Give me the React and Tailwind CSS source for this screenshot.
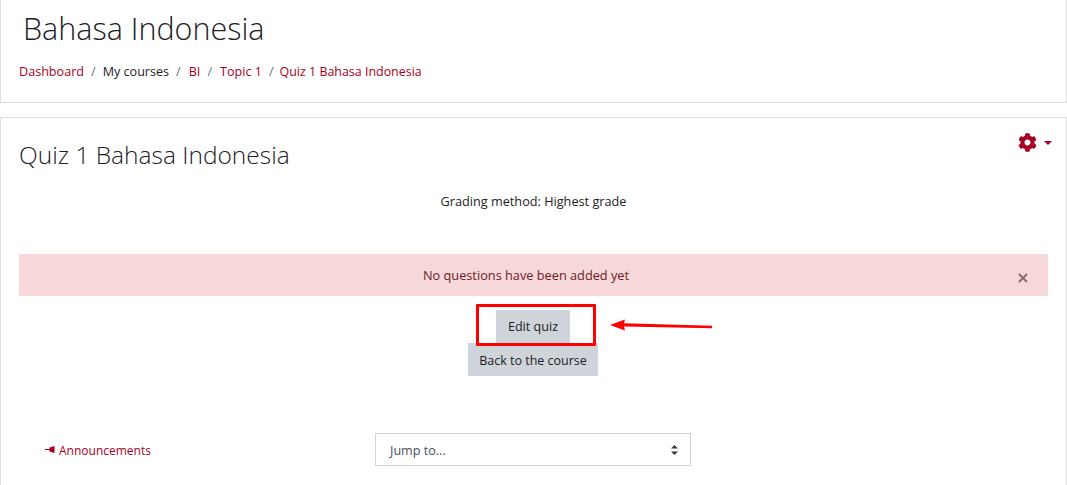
const sans = "font-['Open_Sans','Noto_Sans',sans-serif]";

function Gear() {
  return (
    <svg width="19" height="19" viewBox="0 0 512 512" className="block" fill="#a80024">
      <path d="M487.4 315.7l-42.6-24.6c4.3-23.2 4.3-47 0-70.2l42.6-24.6c4.9-2.8 7.1-8.6 5.5-14-11.1-35.6-30-67.8-54.7-94.6-3.8-4.1-10-5.1-14.8-2.3L380.8 110c-17.9-15.4-38.5-27.3-60.8-35.1V25.8c0-5.6-3.9-10.5-9.4-11.7-36.7-8.2-74.3-7.8-109.2 0-5.5 1.2-9.4 6.1-9.4 11.7V75c-22.2 7.9-42.8 19.8-60.8 35.1L88.7 85.5c-4.9-2.8-11-1.9-14.8 2.3-24.7 26.7-43.6 58.9-54.7 94.6-1.7 5.4.6 11.2 5.5 14L67.3 221c-4.3 23.2-4.3 47 0 70.2l-42.6 24.6c-4.9 2.8-7.1 8.6-5.5 14 11.1 35.6 30 67.8 54.7 94.6 3.8 4.1 10 5.1 14.8 2.3l42.6-24.6c17.9 15.4 38.5 27.3 60.8 35.1v49.2c0 5.6 3.9 10.5 9.4 11.7 36.7 8.2 74.3 7.8 109.2 0 5.5-1.2 9.4-6.1 9.4-11.7v-49.2c22.2-7.9 42.8-19.8 60.8-35.1l42.6 24.6c4.9 2.8 11 1.9 14.8-2.3 24.7-26.7 43.6-58.9 54.7-94.6 1.5-5.5-.7-11.3-5.6-14.1zM256 336c-44.1 0-80-35.9-80-80s35.9-80 80-80 80 35.9 80 80-35.9 80-80 80z" />
    </svg>
  );
}

function Crumb({ children, dark }) {
  return <span className={dark ? "text-[#1d2125]" : "text-[#a80024]"}>{children}</span>;
}

function Sep() {
  return <span className="px-[7px] text-[#6a737b]">/</span>;
}

export default function App() {
  return (
    <div className={`${sans} relative h-[485px] w-[1067px] overflow-hidden bg-white text-[12.6px] text-[#1d2125]`}>
      <header className="flex h-[103px] flex-col border-x border-b border-[#dfdfdf] pl-[18px]">
        <h1 className="ml-[4px] mt-[6px] h-[44px] text-[30.5px] font-light leading-[44px] text-[#1d2125]">Bahasa Indonesia</h1>
        <nav className="mt-[13px] flex h-[18px] items-center leading-[18px]">
          <Crumb>Dashboard</Crumb><Sep />
          <Crumb dark>My courses</Crumb><Sep />
          <span className="pl-[1px]"><Crumb>BI</Crumb></span><span className="pl-[7px] pr-[8px] text-[#6a737b]">/</span>
          <Crumb>Topic 1</Crumb><span className="pl-[7px] pr-[6px] text-[#6a737b]">/</span>
          <span className="text-[12.45px]"><Crumb>Quiz 1 Bahasa Indonesia</Crumb></span>
        </nav>
      </header>

      <main className="mt-[14px] flex h-[400px] flex-col border border-b-0 border-[#dfdfdf] px-[18px]">
        <div className="flex h-[72px] items-start justify-between">
          <h2 className="mt-[19px] text-[24.5px] font-light leading-[36px] text-[#1d2125]">Quiz 1 Bahasa Indonesia</h2>
          <div className="mr-[-4px] mt-[15px] flex items-center gap-[7px]">
            <Gear />
            <span className="mt-[1px] h-0 w-0 border-x-[4px] border-t-[4px] border-x-transparent border-t-[#a80024]" />
          </div>
        </div>

        <p className="mt-[2px] mb-[1px] h-[18px] text-center text-[12.7px] leading-[18px] text-[#1d2125]">Grading method: Highest grade</p>

        <div className="relative mt-[43px] flex h-[42px] w-[1029px] items-center justify-center bg-[#f7d8da] pr-[15px] pt-[1px] text-[12.75px] text-[#6e1a1f]">
          <span>No questions have been added yet</span>
          <svg width="10" height="10" viewBox="0 0 10 10" className="absolute right-[20px] top-[19px]" stroke="#8a6c6e" strokeWidth="2" fill="none">
            <path d="M1 1l8 8M9 1l-8 8" />
          </svg>
        </div>

        <div className="mt-[14px] flex flex-col items-center pr-[1px]">
          <button className="flex h-[33px] w-[74px] items-center justify-center bg-[#ced4da] pt-[1px] text-[#1d2125]">Edit quiz</button>
          <button className="flex h-[33px] w-[130px] items-center justify-center bg-[#ced4da] pt-[4px] text-[12.5px] text-[#1d2125]">Back to the course</button>
        </div>

        <div className="relative mt-[57px] flex h-[33px] items-center">
          <a className="ml-[26px] flex items-center gap-[4px] pt-[3px] text-[12px] text-[#a80024]">
            <svg width="10" height="7" viewBox="0 0 10 7" fill="#a80024" className="mt-[-3px] block">
              <path d="M0 3h4.5V1.5L9.5 0v7L4.5 5.5V4H0z" />
            </svg>
            Announcements
          </a>
          <div className="absolute left-[356px] top-0 flex h-[33px] w-[316px] items-center justify-between border border-[#ced4da] bg-white pl-[14px] pr-[12px] pt-[4px] text-[#495057]">
            <span>Jump to...</span>
            <svg width="7" height="10" viewBox="0 0 7 10" fill="#343a40" className="mt-[-4px] block">
              <path d="M3.5 0L7 3.6H0zM3.5 10L0 6.4h7z" />
            </svg>
          </div>
        </div>
      </main>

      <div className="absolute left-[476px] top-[304px] h-[42px] w-[120px] rounded-[1px] border-[3px] border-[#ff0000]" />
      <svg width="104" height="14" viewBox="0 0 104 14" className="absolute left-[610px] top-[318px]" fill="#ff0000">
        <path d="M0 7L15 1.5L14 5.2L102 7.8V10.2L14 8.6L15 12.5Z" />
      </svg>
    </div>
  );
}
